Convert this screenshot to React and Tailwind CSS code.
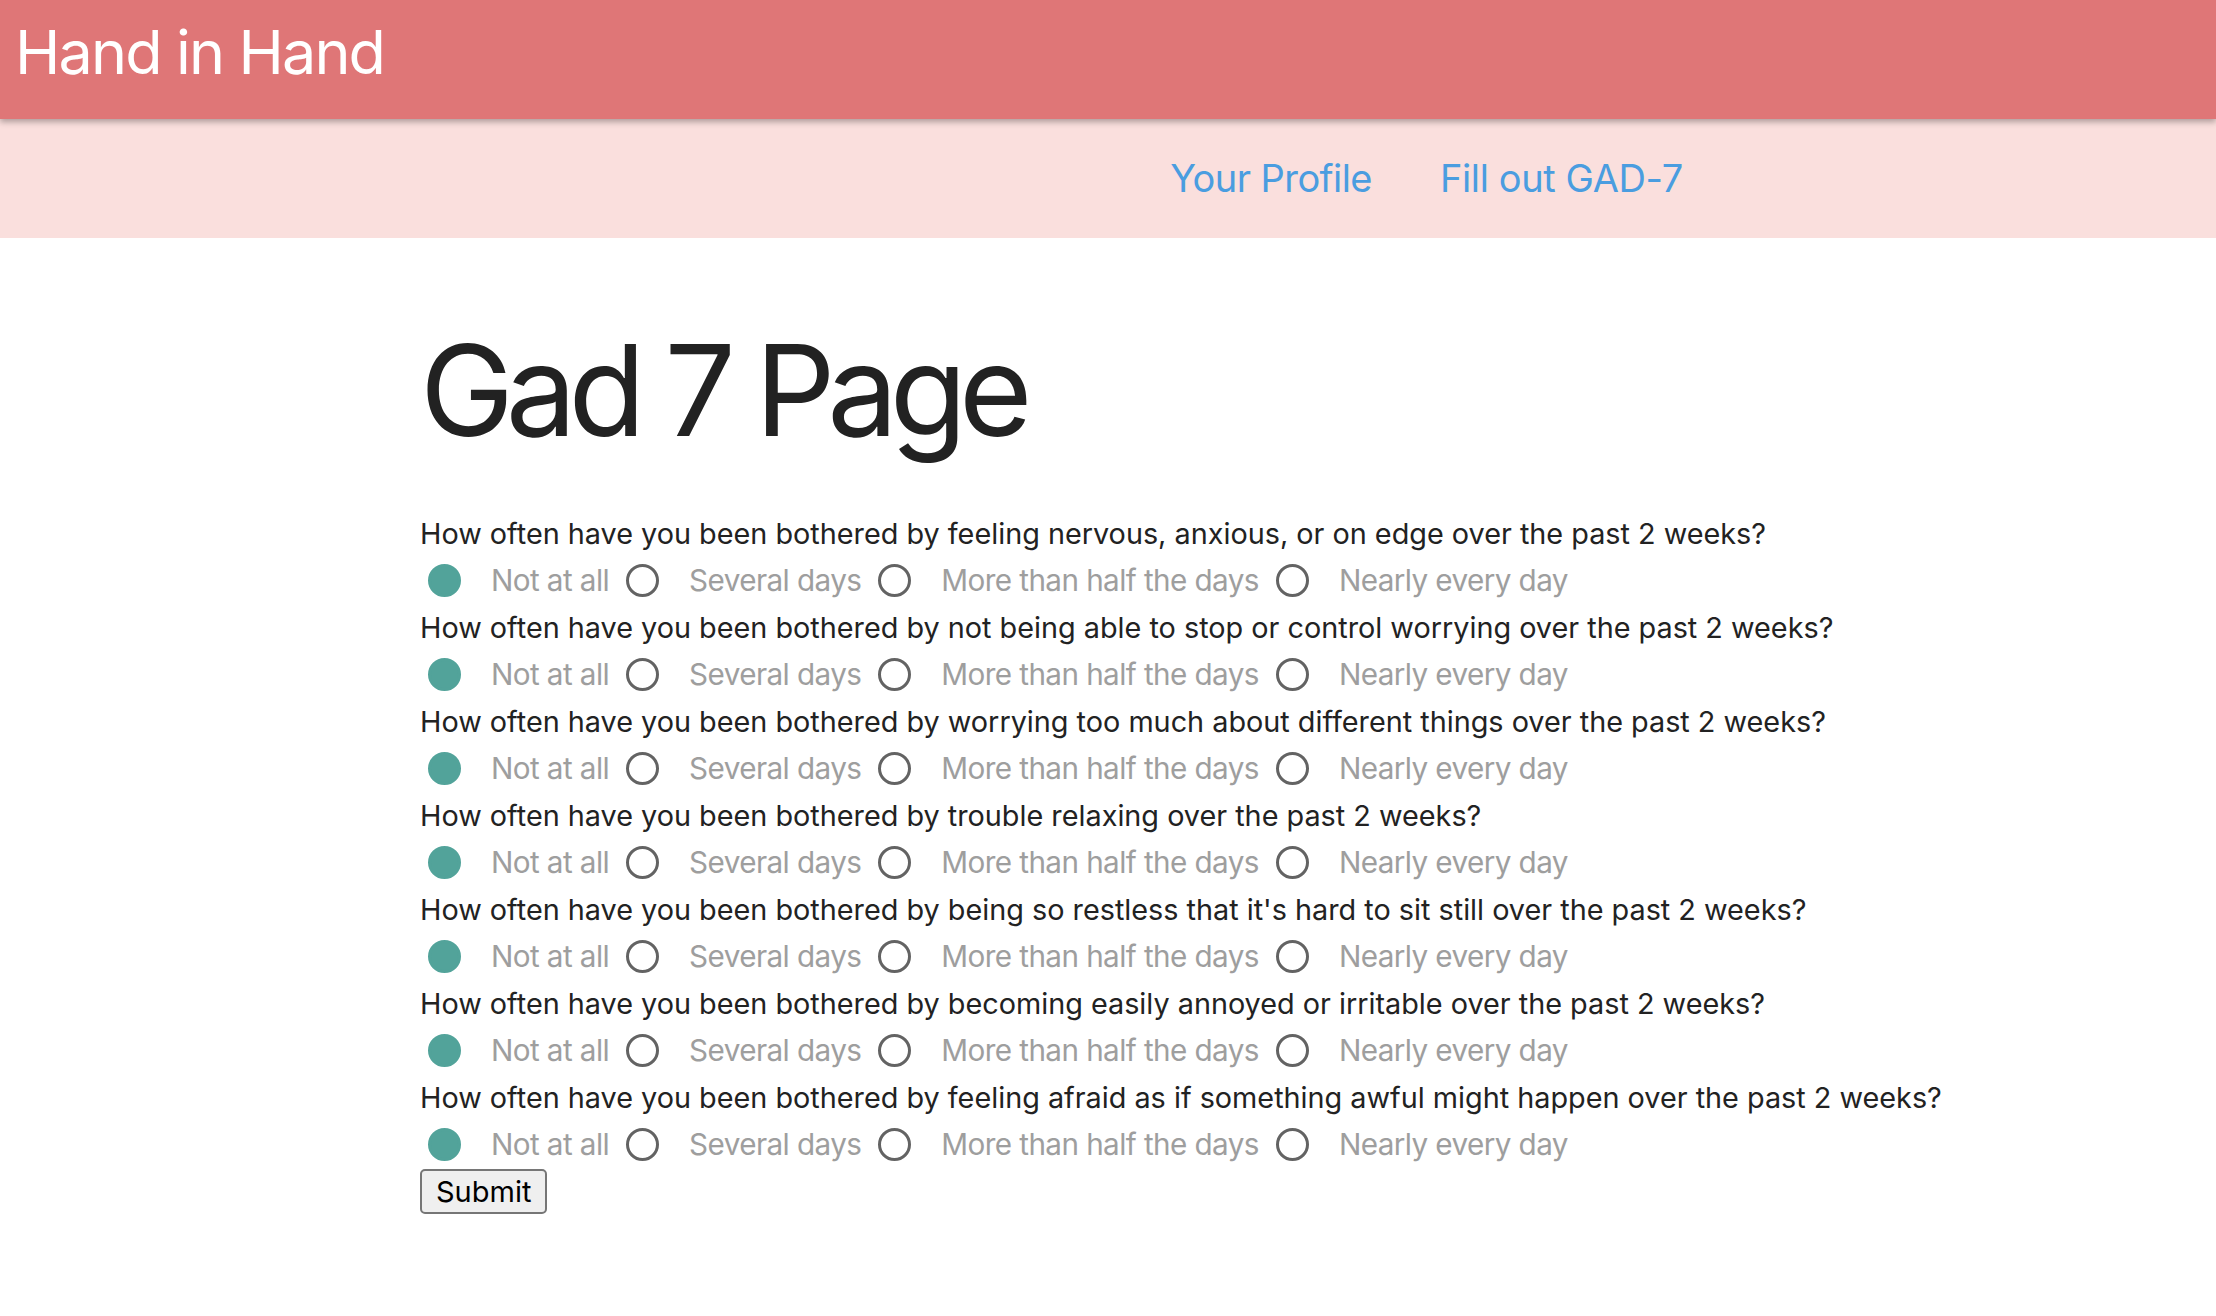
import React from 'react';

const questions = [
  'How often have you been bothered by feeling nervous, anxious, or on edge over the past 2 weeks?',
  'How often have you been bothered by not being able to stop or control worrying over the past 2 weeks?',
  'How often have you been bothered by worrying too much about different things over the past 2 weeks?',
  'How often have you been bothered by trouble relaxing over the past 2 weeks?',
  "How often have you been bothered by being so restless that it's hard to sit still over the past 2 weeks?",
  'How often have you been bothered by becoming easily annoyed or irritable over the past 2 weeks?',
  'How often have you been bothered by feeling afraid as if something awful might happen over the past 2 weeks?',
];

const options = ['Not at all', 'Several days', 'More than half the days', 'Nearly every day'];

const Question = ({ text, index }) => (
  <div>
    <p className="h-[47px] leading-[47px] text-[28.8px] text-[#222]">{text}</p>
    <div className="h-[47px] flex items-center">
      {options.map((opt, i) => (
        <label key={opt} className="flex items-center">
          <input
            type="radio"
            name={`q${index}`}
            defaultChecked={i === 0}
            className="appearance-none w-[33px] h-[33px] rounded-full border-[3px] border-[#636363] checked:bg-[#52a39a] checked:border-[#52a39a] ml-[8px] mr-[30px]"
          />
          <span className="text-[29.7px] text-[#9e9e9e] mr-[9px] tracking-[-0.02em]">{opt}</span>
        </label>
      ))}
    </div>
  </div>
);

export default function App() {
  return (
    <div className="min-h-screen bg-white font-['Inter',sans-serif]">
      {/* Header */}
      <header className="relative z-10 h-[119px] bg-[#df7677] shadow-[0_3px_6px_rgba(0,0,0,0.3)] flex items-center px-[15px] pb-[14px]">
        <h1 className="text-[61px] text-white tracking-[-0.03em] leading-none">Hand in Hand</h1>
      </header>

      {/* Nav */}
      <nav className="h-[119px] bg-[#fadfdd] flex items-center justify-end pr-[533px] gap-[68px]">
        <a className="text-[38px] text-[#4a9de0] tracking-[-0.015em]">Your Profile</a>
        <a className="text-[38px] text-[#4a9de0] tracking-[-0.01em]">Fill out GAD-7</a>
      </nav>

      {/* Content */}
      <main className="pl-[420px] pt-[77px]">
        <h2 className="text-[126px] leading-[1.2] text-[#222] tracking-[-0.065em] mb-[44px]">Gad 7 Page</h2>
        <form>
          {questions.map((q, i) => (
            <Question key={i} text={q} index={i} />
          ))}
          <button
            type="button"
            className="mt-[1px] h-[45px] px-[14px] border-2 border-[#767676] rounded-[5px] bg-[#efefef] text-[29px] text-black leading-none"
          >
            Submit
          </button>
        </form>
      </main>
    </div>
  );
}
